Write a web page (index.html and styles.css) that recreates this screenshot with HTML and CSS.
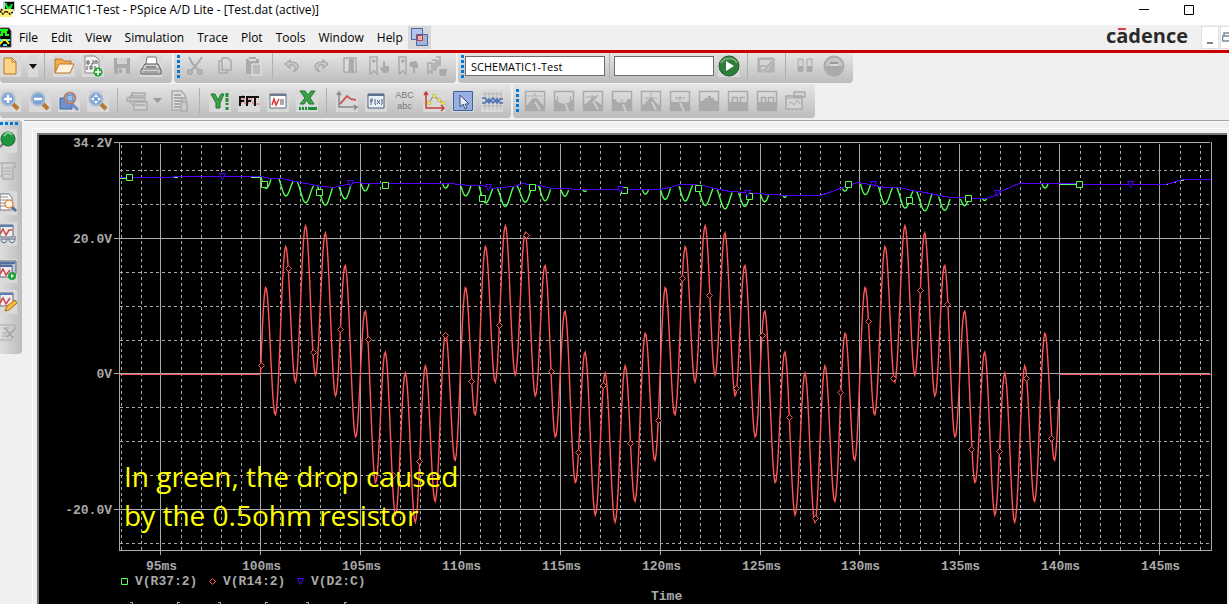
FILE: index.html
```html
<!DOCTYPE html>
<html lang="en">
<head>
<meta charset="utf-8">
<title>SCHEMATIC1-Test - PSpice A/D Lite</title>
<link rel="stylesheet" href="styles.css">
</head>
<body>
<header class="titlebar">
  <svg class="app-icon" width="16" height="17" viewBox="0 0 16 17"><path d="M3 0h12v10H3z" fill="#c8c8c8"/><path d="M5 1h9v7H5z" fill="#000"/><path d="M5 2h2v2l2 2 2-3h2l-2 5H7L5 5z" fill="#0e3"/><path d="M0 8h12v8H0z" fill="#ffef70"/><path d="M0 10l3 3 3-3 4 3 3-2M1 8l2 2" stroke="#000" fill="none" stroke-width="1.5" stroke-dasharray="2 1"/></svg>
  <h1 class="title">SCHEMATIC1-Test - PSpice A/D Lite - [Test.dat (active)]</h1>
  <button class="win-btn" aria-label="Minimize"><svg width="10" height="10"><path d="M0 4.5h10" stroke="#000"/></svg></button>
  <button class="win-btn" aria-label="Maximize"><svg width="10" height="10"><path d="M.5.5h9v9h-9z" stroke="#000" fill="none"/></svg></button>
</header>
<nav class="menubar">
  <svg class="doc-icon" width="12" height="21" viewBox="0 0 12 21"><path d="M0 1h9l2 3v16H0z" fill="#000" stroke="#666"/><path d="M0 3h8M0 8h2V5h4v3h3" stroke="#1f1" stroke-width="2" fill="none"/><path d="M0 17l3-4h3l3 4" stroke="#ff0" stroke-width="2" fill="none"/><path d="M0 13h3M7 13h3M3 18h4" stroke="#5df" stroke-width="2"/></svg>
  <button>File</button><button>Edit</button><button>View</button><button>Simulation</button><button>Trace</button><button>Plot</button><button>Tools</button><button>Window</button><button>Help</button>
  <button class="cascade" aria-label="Cascade windows"><svg width="23" height="23" viewBox="0 0 23 23"><g stroke="#4668a8"><path d="M3.500 2.500h11v11h-11z" fill="#b4c6e8"/><path d="M8.500 8.500h11v11h-11z" fill="#9eb4dc"/></g><path d="M9.500 9.500h5v5h-5z" fill="#efb0b4" stroke="#c33"/></svg></button>
  <span class="brand">c<span class="macron">a</span>dence</span>
  <button class="mdi-btn" aria-label="Minimize document"><svg width="7" height="14"><path d="M0 12h6" stroke="#778899" stroke-width="2"/></svg></button>
  <button class="mdi-btn mdi-restore" aria-label="Restore document"><svg width="7" height="14"><path d="M2 5V2h5M0 5h7M.5 5v5H7" fill="none" stroke="#778899" stroke-width="1.500"/></svg></button>
</nav>
<section class="bars">
  <div class="row">
    <div class="toolbar file">
      <button class="tool first" aria-label="New"><svg viewBox="0 0 22 22"><path d="M5 3h8l4 4v12H5z" fill="#fbd58a" stroke="#b9791b"/><path d="M13 3v4h4z" fill="#fff3cf" stroke="#b9791b"/></svg></button>
      <button class="tool slim" aria-label="New options"><svg viewBox="0 0 10 22"><path d="M1 9h8l-4 5z" fill="#111"/></svg></button>
      <i class="sep"></i>
      <button class="tool" aria-label="Open"><svg viewBox="0 0 22 22"><path d="M2 18V4h7l2 2h7v3" fill="#efac54" stroke="#bd7426"/><path d="M2 18L6 9h15l-4 9z" fill="#fff2dd" stroke="#bd7426"/></svg></button>
      <button class="tool" aria-label="Import"><svg viewBox="0 0 22 22"><path d="M3 1h10l4 4v13H3z" fill="#f2f2f2" stroke="#888"/><path d="M5 6h2v3H5zM9 9h2V5M13 9V6h2v3M5 11v4M8 11h2v3H8zM13 11v3" fill="none" stroke="#555"/><circle cx="16" cy="17" r="4.500" fill="#25a532"/><path d="M13 17h6M16 14v6" stroke="#fff" stroke-width="1.600"/></svg></button>
      <button class="tool off" aria-label="Save"><svg viewBox="0 0 22 22"><path d="M3 3h16v16H3z" fill="#aaa"/><path d="M6 3h10v6H6z" fill="#d2d2d2"/><path d="M7 13h8v6H7z" fill="#ccc"/><path d="M8 14h3v4H8z" fill="#aaa"/></svg></button>
      <button class="tool" aria-label="Print"><svg viewBox="0 0 22 22"><path d="M6 9l1-7h9l1 7" fill="#fff" stroke="#777"/><path d="M1 15l4-6h13l3 6v4H1z" fill="#d3d3d3" stroke="#555"/><path d="M2 14h18M3 17h16" stroke="#777"/><path d="M6 12h10" stroke="#444" stroke-width="1"/></svg></button>
    </div>
    <div class="toolbar">
      <i class="grip"></i>
      <button class="tool off" aria-label="Cut"><svg viewBox="0 0 22 22"><path d="M4 2l3 6 7 8M17 2l-4 6-7 8" fill="none" stroke="#aaa" stroke-width="2"/><g fill="none" stroke="#aaa" stroke-width="2"><circle cx="5" cy="17" r="2"/><circle cx="15" cy="17" r="2"/></g></svg></button>
      <button class="tool off" aria-label="Copy"><svg viewBox="0 0 22 22"><path d="M8 3h6l3 3v9H8zM8 6H5v12h8v-3" fill="none" stroke="#aaa" stroke-width="1.500"/></svg></button>
      <button class="tool off" aria-label="Paste"><svg viewBox="0 0 22 22"><path d="M3 4h3V2h7v2h3v15H3z" fill="#aaa"/><path d="M6 4h7v2H6z" fill="#ddd"/><path d="M9 9h9v11H9z" fill="#bbb" stroke="#eee"/></svg></button>
      <i class="sep"></i>
      <button class="tool off" aria-label="Undo"><svg viewBox="0 0 22 22"><path d="M9 5L4 9l5 4v-3c5-1 7 3 3 7 7-3 7-10-3-10z" fill="#ccc" stroke="#aaa" stroke-width="1.400"/></svg></button>
      <button class="tool off" aria-label="Redo"><svg viewBox="0 0 22 22"><path d="M13 5l5 4-5 4v-3c-5-1-7 3-3 7-7-3-7-10 3-10z" fill="#ccc" stroke="#aaa" stroke-width="1.400"/></svg></button>
      <button class="tool off" aria-label="Toggle bookmark"><svg viewBox="0 0 22 22"><path d="M5 3h12v14H5z" fill="#ddd" stroke="#aaa" stroke-width="1.500"/><path d="M10 4h5v15l-3-3-3 3z" fill="#aaa"/></svg></button>
      <button class="tool off" aria-label="Next bookmark"><svg viewBox="0 0 22 22"><path d="M2 2h7v17l-3-3-4 3zM5.500 4v4M4 6h4" fill="none" stroke="#aaa" stroke-width="1.500"/><path d="M15 6h2v5h4v5l-2 2h-4l-3-5 3-1z" fill="#aaa"/></svg></button>
      <button class="tool off" aria-label="Previous bookmark"><svg viewBox="0 0 22 22"><path d="M2 2h7v17l-3-3-4 3zM5.500 4v4M4 6h4" fill="none" stroke="#aaa" stroke-width="1.500"/><path d="M13 7l6-1 2 3v4h-3v5h-2v-5l-4-2z" fill="#aaa"/></svg></button>
      <button class="tool off" aria-label="Clear bookmarks"><svg viewBox="0 0 22 22"><path d="M2 8h4v10l-2-2-2 2zM6 5h4v11M10 2h4v9M8 16V8M12 12V5" fill="none" stroke="#aaa" stroke-width="1.500"/><path d="M13 14h8l-1 7h-6z" fill="#aaa"/></svg></button>
    </div>
    <div class="toolbar">
      <i class="grip"></i>
      <input class="box profile" aria-label="Simulation profile" value="SCHEMATIC1-Test">
      <i class="sep"></i>
      <input class="box run-to" aria-label="Run to">
      <button class="tool" aria-label="Run"><svg viewBox="0 0 22 22"><circle cx="11" cy="11" r="10" fill="#2d7d3b" stroke="#1c5d2a"/><path d="M3 8c3-6 13-6 16 0" fill="none" stroke="#75a97c" stroke-width="2"/><path d="M8 6l8 5-8 5z" fill="#fff"/></svg></button>
      <i class="sep"></i>
      <button class="tool off" aria-label="Edit profile"><svg viewBox="0 0 22 22"><path d="M2 3h16v14H2z" fill="#b5b5b5" stroke="#aaa"/><path d="M4 5h11v5H4zM5 12h8v2H5z" fill="#d5d5d5"/><path d="M20 4L9 16l-3 3 1-4L17 4z" fill="#aaa" stroke="#ccc"/></svg></button>
      <i class="sep"></i>
      <button class="tool off" aria-label="Pause"><svg viewBox="0 0 22 22"><path d="M4 4h5v12H4zM13 4h5v12h-5z" fill="#d5d5d5" stroke="#aaa"/><path d="M4 11h5v6H4zM13 11h5v6h-5z" fill="#aaa"/></svg></button>
      <button class="tool off" aria-label="Stop"><svg viewBox="0 0 22 22"><circle cx="11" cy="11" r="9.500" fill="#c5c5c5" stroke="#aaa" stroke-width="2"/><path d="M2 11h18l-3 6-6 4-6-4z" fill="#aaa"/><path d="M7 8h8" stroke="#999" stroke-width="2"/><path d="M7 10h8" stroke="#eee"/></svg></button>
    </div>
  </div>
  <div class="row second">
    <div class="toolbar">
      <button class="tool first" aria-label="Zoom in"><svg viewBox="0 0 22 22"><path d="M12 12l7 7" stroke="#b97732" stroke-width="4"/><circle cx="9" cy="9" r="6.500" fill="#7ba4d4" stroke="#a9bdd5" stroke-width="2"/><path d="M5 9h8M9 5v8" stroke="#fff" stroke-width="2.500"/></svg></button>
      <button class="tool" aria-label="Zoom out"><svg viewBox="0 0 22 22"><path d="M12 12l7 7" stroke="#b97732" stroke-width="4"/><circle cx="9" cy="9" r="6.500" fill="#7ba4d4" stroke="#a9bdd5" stroke-width="2"/><path d="M5 9h8" stroke="#fff" stroke-width="2.500"/></svg></button>
      <button class="tool" aria-label="Zoom area"><svg viewBox="0 0 22 22"><path d="M2 8h12v11H2z" fill="#6f92cf" stroke="#3f66a8"/><path d="M13 13l7 7" stroke="#6f8fc8" stroke-width="3"/><circle cx="12" cy="8" r="5.500" fill="#a3bce3" stroke="#bb765f" stroke-width="1.600"/><path d="M9 5h6v6H9z" fill="none" stroke="#5b7fbc"/></svg></button>
      <button class="tool" aria-label="Zoom fit"><svg viewBox="0 0 22 22"><path d="M12 12l7 7" stroke="#b97732" stroke-width="4"/><circle cx="9" cy="9" r="6.500" fill="#7ba4d4" stroke="#a9bdd5" stroke-width="2"/><path d="M9 4l2 3H7zM9 14l2-3H7zM4 9l3-2v4zM14 9l-3-2v4z" fill="#fff"/></svg></button>
      <i class="sep"></i>
      <button class="tool wide off" aria-label="Log command"><svg viewBox="0 0 38 22"><path d="M7 3h13v3H7zM2 8h18v3H2zM9 12h13v8H9zM10 15h10M4 8l3-4M4 11l4 4" fill="#d0d0d0" stroke="#aaa" stroke-width="1.400"/><path d="M28 8h9l-4.500 5z" fill="#999"/></svg></button>
      <button class="tool off" aria-label="Report"><svg viewBox="0 0 22 22"><path d="M3 1h9l4 4v15H3z" fill="#ddd" stroke="#aaa" stroke-width="1.500"/><path d="M5 5h7M5 8h9M5 11h9M5 14h6M5 17h6" stroke="#999" stroke-width="1.500"/><path d="M12 12h6v9h-6zM13 12V8h4v4" fill="#ccc" stroke="#aaa" stroke-width="1.500"/></svg></button>
      <i class="sep"></i>
      <button class="tool" aria-label="Log Y axis"><svg viewBox="0 0 22 22"><path d="M2 4h4l3 6 3-6h3l-4 9v5H7v-5z" fill="#39a445" stroke="#22762e"/><path d="M18 3v12M18 17v3" stroke="#218c33" stroke-width="3" stroke-dasharray="4 1"/></svg></button>
      <button class="tool" aria-label="FFT"><svg viewBox="0 0 22 22"><path d="M0 14h3l2-9 2 9h3l2-8 3 8h7" fill="none" stroke="#e57878"/><path d="M2 16V7h5M2 11h4M9 16V7h5M9 11h4M17 16V7m-3 0h7" fill="none" stroke="#111" stroke-width="2"/></svg></button>
      <button class="tool" aria-label="Performance analysis"><svg viewBox="0 0 22 22"><path d="M3 4h16v14H3z" fill="#fff" stroke="#5e6f82"/><path d="M3 4h16v2H3z" fill="#6e7c8f"/><path d="M5 15l2-6 2 6 3-6" fill="none" stroke="#d33" stroke-width="1.500"/><path d="M13 10h4M13 12h4M13 14h4" stroke="#555"/></svg></button>
      <button class="tool" aria-label="Log X axis"><svg viewBox="0 0 22 22"><path d="M4 1h5l3 4 3-4h4l-5 7 4 6h-5l-2-4-3 4H4l5-6z" fill="#39a445" stroke="#22762e"/><path d="M3 18.500h18" stroke="#188d31" stroke-width="3" stroke-dasharray="2 1 2 1 2 1 9 1"/></svg></button>
      <i class="sep"></i>
      <button class="tool" aria-label="Add trace"><svg viewBox="0 0 22 22"><path d="M3 3v14h17M1 5l2-3 2 3M18 15l3 2-3 3" fill="none" stroke="#888" stroke-width="1.500"/><path d="M4 14l7-8 4 3 5 1" fill="none" stroke="#cc5d5d" stroke-width="2"/></svg></button>
      <button class="tool" aria-label="Evaluate measurement"><svg viewBox="0 0 22 22"><path d="M3 4h16v14H3z" fill="#eaf0f7" stroke="#4c6079"/><path d="M3 4h16v2H3z" fill="#5b7290"/><path d="M6 15v-6h2M5 11h3M10 9v5l1 1M12 10l3 4M15 10l-3 4M17 9v5l-1 1" fill="none" stroke="#4c6079"/></svg></button>
      <button class="tool label" aria-label="Text label">ABC<br>abc</button>
      <button class="tool" aria-label="Mark data points"><svg viewBox="0 0 22 22"><path d="M3 2v16h18M1 5l2-3 2 3M18 15l3 3-3 3" fill="none" stroke="#c83a3a" stroke-width="1.500"/><path d="M5 14l6-9 4 5 5 3" fill="none" stroke="#777"/><g fill="#f5e63c" stroke="#999" stroke-width=".5"><circle cx="6" cy="13" r="2"/><circle cx="11" cy="6" r="2"/><circle cx="16" cy="10" r="2"/><circle cx="20" cy="13" r="2"/></g></svg></button>
      <button class="tool" aria-label="Toggle cursor"><svg viewBox="0 0 22 22"><path d="M1.500 1.500h19v19h-19z" fill="#98afe0" stroke="#41619c"/><path d="M8 5v12l3-3 2 5 2-1-2-4h4z" fill="#e8edf8" stroke="#344e80"/></svg></button>
      <button class="tool" aria-label="Toggle grid"><svg viewBox="0 0 22 22"><path d="M1 4h20M1 8h20M1 12h20M1 16h20M4 2v18M8 2v18M12 2v18M16 2v18M20 2v18" stroke="#aaa" stroke-width=".7"/><path d="M1 8h3l4 5 4-5 4 5 3-4h3M1 13h3l4-4 4 4 4-4 3 4h3" fill="none" stroke="#4c72b4" stroke-width="1.500"/></svg></button>
    </div>
    <div class="toolbar">
      <i class="grip"></i>
      <button class="tool off" aria-label="Cursor peak"><svg viewBox="0 0 22 22"><path d="M1.500 1.500h19v19h-19z" fill="none" stroke="#aaa" stroke-width="1.500"/><path d="M2 20v-5c4 0 4-7 9-7s5 7 9 7v5z" fill="#aaa"/><path d="M3 6h16M11 3v4" stroke="#aaa" stroke-dasharray="3 1"/><path d="M11 12l5 8" stroke="#ccc" stroke-width="2"/></svg></button>
      <button class="tool off" aria-label="Cursor trough"><svg viewBox="0 0 22 22"><path d="M1.500 1.500h19v19h-19z" fill="none" stroke="#aaa" stroke-width="1.500"/><path d="M2 20V10h2V6h1v6l6 2 6-2V6h1v4h2v10z" fill="#aaa"/><path d="M12 12l3 9" stroke="#ccc" stroke-width="2"/></svg></button>
      <button class="tool off" aria-label="Cursor slope"><svg viewBox="0 0 22 22"><path d="M1.500 1.500h19v19h-19z" fill="none" stroke="#aaa" stroke-width="1.500"/><path d="M2 20v-6c5 0 6-8 15-9l-5 5 8 5v5z" fill="#aaa"/><path d="M4 7h8M10 4v6" stroke="#aaa"/><path d="M11 11l5 8" stroke="#ccc" stroke-width="2"/></svg></button>
      <button class="tool off" aria-label="Cursor min"><svg viewBox="0 0 22 22"><path d="M1.500 1.500h19v19h-19z" fill="none" stroke="#aaa" stroke-width="1.500"/><path d="M2 20V9h2l3 4h7l3-4h3v11z" fill="#aaa"/><path d="M6 13h10M11 9v4" stroke="#aaa"/><path d="M12 14l3 8" stroke="#ccc" stroke-width="2"/></svg></button>
      <button class="tool off" aria-label="Cursor max"><svg viewBox="0 0 22 22"><path d="M1.500 1.500h19v19h-19z" fill="none" stroke="#aaa" stroke-width="1.500"/><path d="M2 20v-5c5-1 5-6 9-7 4 1 4 6 9 7v5z" fill="#aaa"/><path d="M5 8h12M11 3v7" stroke="#aaa"/><path d="M12 12l4 8" stroke="#ccc" stroke-width="2"/></svg></button>
      <button class="tool off" aria-label="Cursor point"><svg viewBox="0 0 22 22"><path d="M1.500 1.500h19v19h-19z" fill="none" stroke="#aaa" stroke-width="1.500"/><path d="M2 12h18v8H2z" fill="#aaa"/><path d="M6 8h10M11 5v6" stroke="#aaa"/><path d="M11 13l4 8" stroke="#ccc" stroke-width="2"/></svg></button>
      <button class="tool off" aria-label="Cursor search"><svg viewBox="0 0 22 22"><path d="M1.500 1.500h19v19h-19z" fill="none" stroke="#aaa" stroke-width="1.500"/><path d="M2 20v-9h3l2-3h3V6h3v2h2l2 3h3v9z" fill="#aaa"/></svg></button>
      <button class="tool off" aria-label="Cursor next transition"><svg viewBox="0 0 22 22"><path d="M1.500 1.500h19v19h-19z" fill="none" stroke="#aaa" stroke-width="1.500"/><path d="M2 12h18v8H2z" fill="#aaa"/><path d="M5.500 12V7.500h5V12M13.500 12V7.500H18" fill="none" stroke="#aaa" stroke-width="1.500"/></svg></button>
      <button class="tool off" aria-label="Cursor previous transition"><svg viewBox="0 0 22 22"><path d="M1.500 1.500h19v19h-19z" fill="none" stroke="#aaa" stroke-width="1.500"/><path d="M2 12h18v8H2z" fill="#aaa"/><path d="M5.500 12V7.500h4V12M12.500 12V7.500h5V12" fill="none" stroke="#aaa" stroke-width="1.500"/></svg></button>
      <button class="tool off" aria-label="Mark label"><svg viewBox="0 0 22 22"><path d="M1 6h16v13H1zM9 2h11v5H9z" fill="#d5d5d5" stroke="#aaa" stroke-width="1.500"/><path d="M3 15l3-3 3 3 3-5 3 4M1 8h16" fill="none" stroke="#aaa"/></svg></button>
    </div>
  </div>
</section>
<main class="workspace">
  <aside class="rail">
    <i class="grip across"></i>
    <button class="side" aria-label="Pin"><svg viewBox="0 0 17 24"><path d="M0 18l7-7" stroke="#777" stroke-width="2"/><circle cx="8" cy="10" r="7" fill="#219541" stroke="#17692c"/><path d="M4 7c2-4 6-4 8-1" stroke="#82d393" stroke-width="2" fill="none"/></svg></button>
    <button class="side off" aria-label="Netlist"><svg viewBox="0 0 17 24"><path d="M0 3h15v4h-2v12H3v-3H0M2 3v13" fill="none" stroke="#b0b0b0" stroke-width="1.500"/><path d="M3 8h8M3 11h8M3 14h8" stroke="#aaa"/></svg></button>
    <button class="side" aria-label="View output file"><svg viewBox="0 0 17 24"><path d="M0 3h9l3 4v12H0z" fill="#fff" stroke="#777"/><path d="M0 6h8M0 9h8M0 12h7M0 15h8" stroke="#888"/><path d="M11 15l5 5" stroke="#56719f" stroke-width="3"/><circle cx="9" cy="13" r="4" fill="#fff2df" stroke="#d98c4c" stroke-width="1.500"/></svg></button>
    <button class="side" aria-label="View simulation results"><svg viewBox="0 0 17 24"><path d="M0 3h13v12H0z" fill="#eee" stroke="#667"/><path d="M0 4h13" stroke="#5d7fb8" stroke-width="2"/><path d="M0 12l3-5 3 6 3-5h3" fill="none" stroke="#c44" stroke-width="1.500"/><path d="M1 17h6c0 5-6 5-6 0zM9 17h6c0 5-6 5-6 0zM7 17h2M15 17v-3" fill="#d5dfed" stroke="#596b82"/></svg></button>
    <i class="rule"></i>
    <button class="side" aria-label="Run queue"><svg viewBox="0 0 17 24"><path d="M0 2h16v13H0z" fill="#bbc8dd" stroke="#667"/><path d="M0 6h12v12H0z" fill="#eee" stroke="#667"/><path d="M0 4h15M0 7h12" stroke="#4f70a5" stroke-width="2"/><path d="M0 15l3-5 3 6 4-5" fill="none" stroke="#c44" stroke-width="1.500"/><circle cx="12" cy="17" r="4" fill="#20a13b"/><path d="M11 15l3 2-3 2z" fill="#fff"/></svg></button>
    <button class="side" aria-label="Edit settings"><svg viewBox="0 0 17 24"><path d="M0 3h13v13H0z" fill="#eee" stroke="#667"/><path d="M0 4h13" stroke="#5d7fb8" stroke-width="2"/><path d="M0 13l3-5 3 6 4-6" fill="none" stroke="#c44" stroke-width="1.500"/><path d="M5 21l2-5 8-6 2 3-8 7z" fill="#f8bd31" stroke="#a96920"/></svg></button>
    <button class="side off" aria-label="Edit file"><svg viewBox="0 0 17 24"><path d="M0 4h15v4M0 19h11l3-4M3 7h6M2 12h5M2 15h5" fill="none" stroke="#aaa"/><path d="M15 8l-8 8M5 7l8 10" fill="none" stroke="#aaa" stroke-width="2"/></svg></button>
  </aside>
  <section class="mdi">
    <div class="frame">
      <svg id="plot" class="plot" viewBox="39 135 1188 470" role="img" aria-label="Voltage against time"></svg>
    </div>
  </section>
</main>
<script src="plot.js"></script>
</body>
</html>
```
FILE: styles.css
```css
* { box-sizing: border-box; }
body {
  margin: 0;
  height: 100vh;
  overflow: hidden;
  display: flex;
  flex-direction: column;
  background: #f0f0f0;
  color: #000;
  font: 12px/16px "Open Sans", "Noto Sans", sans-serif;
}
button { border: 0; background: none; padding: 0; margin: 0; font: inherit; color: inherit; }
svg { display: block; }

.titlebar { flex: none; display: flex; align-items: center; height: 25px; padding: 0 18px 6px 0; background: #fff; }
.title { flex: 1; margin: 0 0 0 4px; font-size: 12px; line-height: 18px; font-weight: 400; white-space: nowrap; }
.win-btn { width: 45px; height: 18px; display: grid; place-items: center; }

.menubar { flex: none; display: flex; align-items: center; gap: 13px; height: 25px; }
.doc-icon { margin-right: -6px; }
.cascade { width: 23px; height: 23px; margin-left: -8px; background: #d8d8d8; }
.brand { margin-left: auto; font-size: 20px; line-height: 24px; font-weight: 700; color: #2a2a2a; padding-bottom: 4px; }
.macron { display: inline-block; background: linear-gradient(#e03a44, #e03a44) center 4px / 8px 2px no-repeat; }
.mdi-btn { width: 18px; height: 23px; background: #fff; border: 1px solid #e0e0e0; display: grid; place-items: center; }
.mdi-restore { width: 9px; margin-left: -12px; border-right: 0; }

.bars { flex: none; border-top: 3px solid #c00; background: #f0f0f0; }
.row { display: flex; gap: 2px; height: 30px; }
.row.second { height: 37px; padding: 1px 0 2px; }
.toolbar {
  display: flex;
  align-items: center;
  height: 100%;
  padding: 0 5px 4px 0;
  background: linear-gradient(#e6e6e6, #bcbcbc);
  border-radius: 0 0 4px 4px;
}
.toolbar.file { padding-right: 7px; }
.second .toolbar { padding-bottom: 1px; }
.tool { width: 29px; height: 22px; flex: none; display: grid; place-items: center; }
.tool svg { width: 22px; height: 22px; background: #d9d9d9; }
.off svg { background: none; }
.first { width: 25px; justify-content: end; padding-right: 4px; }
.slim { width: 15px; }
.slim svg { width: 10px; }
.wide { width: 42px; }
.wide svg { width: 38px; }
.tool.label { display: block; font: 400 9px/11px "Liberation Sans", sans-serif; color: #777; }
.sep { flex: none; width: 1px; height: 26px; margin: 0 4px; background: #b0b0b0; }
.second .sep { margin: 0 5px; }
.grip { flex: none; width: 3px; height: 23px; margin: 0 1px 0 3px; background: repeating-linear-gradient(#0078d7 0 3px, transparent 3px 5px); }
.box { height: 20px; border: 1px solid #6d6d6d; background: #fff; padding: 0 5px; font: 11px/16px "Open Sans", sans-serif; color: #000; }
.profile { width: 140px; }
.run-to { width: 100px; }

.workspace { flex: 1; min-height: 0; display: flex; align-items: flex-start; gap: 2px; }
.rail {
  flex: none;
  width: 22px;
  height: 234px;
  display: flex;
  flex-direction: column;
  padding: 2px 5px 6px 0;
  background: linear-gradient(90deg, #ddd, #bcbcbc);
  border-radius: 0 4px 4px 0;
}
.grip.across { width: 19px; height: 3px; margin: 0 0 4px; background: repeating-linear-gradient(90deg, #0078d7 0 3px, transparent 3px 5px); }
.side { height: 24px; margin-bottom: 7px; }
.side svg { width: 17px; height: 24px; background: #d9d9d9; }
.side.off svg { background: none; }
.rule { height: 2px; margin: -1px -5px 7px 0; background: #f4f4f4; }
.mdi { flex: 1; min-width: 0; border-top: 1px solid #a0a0a0; box-shadow: inset 0 1px #fff; padding: 7px 0 0 8px; }
.frame { border: 1px solid #fff; border-right: 0; padding: 6px 0 0 6px; }
.plot { width: calc(100% - 2px); height: auto; background: #000; box-shadow: 0 0 0 2px #777; clip-path: inset(-2px 0 0 -2px); }
.mono { font: 700 13px "Liberation Mono", monospace; fill: #aaa; }
.note { font: 400 28px "Open Sans", sans-serif; fill: #ff0; }
.grid { stroke: #aaa; fill: none; shape-rendering: crispEdges; }
.minor { stroke-dasharray: 3 3; }
.trace { fill: none; shape-rendering: crispEdges; }
.wave { fill: none; stroke-width: 1.4; }
.mark { fill: #000; }
.red { stroke: #f55; }
.green { stroke: #5f5; }
.blue { stroke: #50f; }
```
FILE: plot.js
```js
const NS = "http://www.w3.org/2000/svg";
const plot = document.getElementById("plot");

function add(name, attrs, text) {
  const el = document.createElementNS(NS, name);
  for (const key in attrs) el.setAttribute(key, attrs[key]);
  if (text) el.textContent = text;
  plot.appendChild(el);
}
const path = (cls, d) => add("path", { class: cls, d });

const ZERO = 374;
const msToX = t => 260.5 + (t - 100) * 19.98;
const volts = t => 11 * Math.sin(0.2 * Math.PI * t) + 11 * Math.sin(2 * Math.PI * t);

// Minor divisions
for (let t = 93; t <= 147; t++) {
  if (t % 5) path("grid minor", `M${Math.round(msToX(t)) + 0.5} 145V550`);
}
for (const y of [170, 204, 272, 306, 340, 407, 441, 475, 543]) path("grid minor", `M120 ${y + 0.5}H1211`);

// Major divisions and axis labels
for (let t = 95; t <= 145; t += 5) {
  const x = Math.floor(msToX(t)) + 0.5;
  path("grid", `M${x} 144V555`);
  add("text", { class: "mono", x: x + 1, y: 570, "text-anchor": "middle" }, t + "ms");
}
for (const [y, label] of [[142, "34.2V"], [238, "20.0V"], [373, "0V"], [509, "-20.0V"]]) {
  path("grid", `M114 ${y + 0.5}H1210`);
  add("text", { class: "mono", x: 112, y: y + 5, "text-anchor": "end" }, label);
}
path("grid", "M119.500 142V550.500H1211.500V142");

// Supply voltage after the diode
const supply = [
  [120,177],[173,177],[174,176],[262,176],[270,178],[282,178],[295,181],[306,183],[322,186],[335,187],[340,185],
  [350,184],[355,182],[368,183],[450,183],[470,185],[482,185],[493,188],[500,187],[515,186],[522,183],[530,184],
  [540,185],[552,188],[568,188],[576,189],[660,189],[670,187],[680,184],[690,184],[703,185],[715,188],[730,191],
  [745,192],[770,194],[790,195],[820,195],[832,191],[845,186],[858,182],[870,184],[885,187],[900,187],[912,190],
  [925,192],[935,194],[950,197],[980,198],[986,198],[993,196],[1003,190],[1010,187],[1019,183],[1060,183],
  [1095,184],[1164,184],[1170,183],[1182,179],[1211,179]
];
function supplyY(x) {
  let i = 1;
  while (i < supply.length - 1 && supply[i][0] < x) i++;
  const [x0, y0] = supply[i - 1], [x1, y1] = supply[i];
  return y0 + (y1 - y0) * (x - x0) / (x1 - x0);
}

// Drop across the series resistor follows the positive half of the load voltage
path("trace green", "M120 178.500H126M173 177.500H178M251 177.500H261M1060 184.500H1093M1165 184.500H1168M1174 182.500H1176M1180 180.500H1184");
let green = "";
let drawing = false;
for (let x = 261; x < 1060; x += 0.5) {
  const drop = 0.93 * volts(100 + (x - 260.5) / 19.98) - 1;
  if (drop > 0) {
    green += `${drawing ? "L" : "M"}${x} ${(supplyY(x) + drop + 0.5).toFixed(1)}`;
    drawing = true;
  } else drawing = false;
}
path("wave green", green);
path("trace blue", "M" + supply.map(([x, y]) => `${x} ${y + 0.5}`).join("L"));

path("trace red", "M120 374.500H261M1060 374.500H1211");
let red = "M260.500 374";
for (let t = 100; t <= 140; t += 0.05) red += `L${msToX(t).toFixed(1)} ${(ZERO - volts(t) * 6.78).toFixed(1)}`;
path("wave red", red);

// Trace markers
const square = (x, y) => path("mark green", `M${x - 3} ${y - 3}h6v6h-6z`);
const diamond = (x, y) => path("mark red", `M${x} ${y - 3}l3 3l-3 3l-3 -3z`);
const triangle = (x, y) => path("mark blue", `M${x - 3} ${y - 3}h6l-3 6z`);

[[129,177],[264,184],[319,192],[385,185],[482,198],[532,187],[624,190],[698,188],[749,196],[848,184],[909,200],[968,198],[1079,184]]
  .forEach(([x, y]) => square(x + 0.5, y + 0.5));
[[222,176],[350,183],[488,187],[620,189],[747,193],[873,184],[997,193],[1130,184]]
  .forEach(([x, y]) => triangle(x + 0.5, y + 0.5));
[[261,365],[288,268],[313,352],[340,329],[368,339],[445,335],[471,381],[499,325],[526,235],[551,371],[603,385],[682,278],
 [709,295],[736,388],[762,335],[840,392],[868,321],[893,378],[920,290],[947,304],[1026,378],[419,461],[393,475],[578,452],
 [630,443],[658,420],[789,417],[815,518],[971,449],[999,451],[1051,438]]
  .forEach(([x, y]) => diamond(x + 0.5, y + 0.5));

// Legend, axis title and annotation
square(124.5, 581.5);
diamond(212.5, 581.5);
triangle(300.5, 581.5);
add("text", { class: "mono", x: 135, y: 585 }, "V(R37:2)");
add("text", { class: "mono", x: 223, y: 585 }, "V(R14:2)");
add("text", { class: "mono", x: 311, y: 585 }, "V(D2:C)");
add("text", { class: "mono", x: 651, y: 600 }, "Time");
path("grid", "M130 602.500h2l1 2M180 602.500h-2l-1 2M218 602.500h2l1 2M268 602.500h-2l-1 2M306 602.500h2l1 2M347 602.500h-2l-1 2");
add("text", { class: "note", x: 124, y: 487 }, "In green, the drop caused");
add("text", { class: "note", x: 124, y: 526 }, "by the 0.5ohm resistor");
```
